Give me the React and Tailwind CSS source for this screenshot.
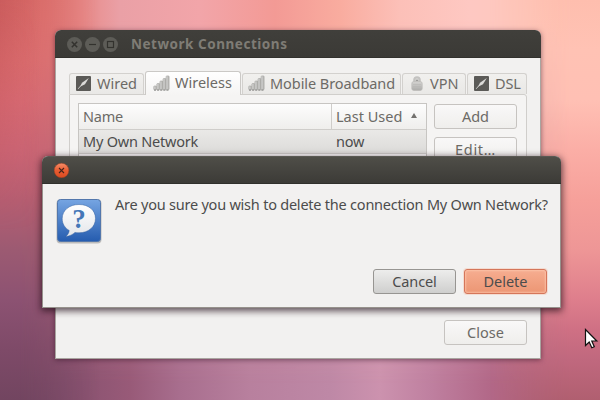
import React from "react";

function WiredIcon() {
  return (
    <svg width="15" height="15" viewBox="0 0 15 15" className="-mt-px shrink-0">
      <rect x="0" y="0" width="15" height="15" rx="1" fill="#5b5a57" />
      <path d="M2.200 12.800L5 9.500" stroke="#c9c8c5" strokeWidth="1" />
      <path d="M4 10.800L6 6.800L12.800 2L9 8.300Z" fill="#dcdbd9" />
    </svg>
  );
}

function SignalIcon({ className }) {
  return (
    <svg width="17" height="16" viewBox="0 0 17 16" className={"shrink-0 " + className}>
      <defs>
        <linearGradient id="bar" x1="0" x2="1">
          <stop offset="0" stopColor="#d9d9d8" />
          <stop offset="1" stopColor="#b0afad" />
        </linearGradient>
      </defs>
      <g fill="url(#bar)" stroke="#a3a2a0" strokeWidth=".6">
        <rect x=".7" y="11" width="3" height="3.800" rx=".8" />
        <rect x="3.800" y="8.500" width="3" height="6.300" rx=".8" />
        <rect x="6.900" y="6" width="3" height="8.800" rx=".8" />
        <rect x="10" y="3.500" width="3" height="11.300" rx=".8" />
        <rect x="13.100" y=".9" width="3" height="13.900" rx=".8" />
      </g>
      <path d="M1 15.100H16" stroke="#7d7c7a" strokeWidth=".9" strokeDasharray="2 1.100" />
    </svg>
  );
}

function LockIcon() {
  return (
    <svg width="12" height="15" viewBox="0 0 12 15" className="-mt-px shrink-0">
      <defs>
        <linearGradient id="lock" x1="0" y1="0" x2="0" y2="1">
          <stop offset="0" stopColor="#d4d3d1" />
          <stop offset="1" stopColor="#adacaa" />
        </linearGradient>
      </defs>
      <path d="M3.200 7V4a2.800 2.800 0 0 1 5.600 0V7" fill="#d8d7d5" stroke="#c3c2c0" strokeWidth="2" />
      <rect x=".8" y="5.500" width="10.400" height="9" rx="2" fill="url(#lock)" stroke="#bbbab8" strokeWidth=".7" />
      <path d="M4.800 4.300h2.400" stroke="#8e8d8b" />
      <path d="M2 8.500h8M2 10.500h8M2 12.500h8" stroke="#b5b4b2" strokeWidth=".5" />
    </svg>
  );
}

function Tab({ className, children }) {
  return (
    <div className={"flex h-[21px] items-center rounded-t-[3px] border border-b-0 border-[#d3d1ce] bg-gradient-to-b from-[#f1f0ee] to-[#e9e8e6] whitespace-nowrap " + className}>
      {children}
    </div>
  );
}

function Button({ className, children }) {
  return (
    <div className={"flex h-[25px] w-[83px] shrink-0 items-center justify-center rounded-[3px] border pb-px text-[14.5px] leading-none " + className}>
      {children}
    </div>
  );
}

const pale = "border-[#c6c3c0] bg-gradient-to-b from-[#f9f8f8] to-[#efeeec] text-[#6c6a66]";

function NetworkWindow() {
  return (
    <section className="absolute left-[55px] top-[30px] flex h-[329px] w-[486px] flex-col rounded-t-[6px] bg-[#f2f1f0] shadow-[0_1px_5px_rgba(40,10,30,0.5)]">
      <header className="flex h-[28px] shrink-0 items-center rounded-t-[6px] border-b border-[#32312d] bg-gradient-to-b from-[#403f3b] to-[#3b3a36] pl-[12px]">
        <svg width="52" height="16" viewBox="0 0 52 16">
          <g fill="#5d5c57">
            <circle cx="7.500" cy="8.500" r="7.500" />
            <circle cx="25.500" cy="8.500" r="7.500" />
            <circle cx="43.500" cy="8.500" r="7.500" />
          </g>
          <g fill="none" stroke="#33322e" strokeWidth="1.200">
            <path d="M4.800 5.800l5.400 5.400M10.200 5.800l-5.400 5.400" strokeWidth="1.500" />
            <path d="M22 8.500h7" />
            <rect x="40.500" y="5.500" width="6" height="6" />
          </g>
        </svg>
        <h1 className="ml-[12px] mt-[2px] text-[13.5px] font-bold leading-none tracking-[0.53px] text-[#7f7c75]">Network Connections</h1>
      </header>
      <div className="flex flex-1 flex-col border border-t-0 border-[#a9a5a0] px-[13px] pt-[13px]">
        <nav className="relative z-10 flex h-[24px] items-end gap-px text-[14.5px] leading-none text-[#6c6a66]">
          <Tab className="mb-px w-[75px] gap-[6px] pl-[6px]"><WiredIcon /><span className="-mt-px">Wired</span></Tab>
          <div className="flex h-[24px] w-[96px] items-center gap-[5px] rounded-t-[3px] border border-b-0 border-[#cbc9c6] bg-gradient-to-b from-white to-[#f5f4f3] pl-[7px] whitespace-nowrap">
            <SignalIcon className="-mt-[2px]" /><span className="-mt-[3px]">Wireless</span>
          </div>
          <Tab className="mb-px w-[159px] gap-[5px] pl-[5px]"><SignalIcon className="-mt-[3px]" /><span className="-mt-px tracking-[-0.07px]">Mobile Broadband</span></Tab>
          <Tab className="mb-px w-[64px] gap-[7px] pl-[8px]"><LockIcon /><span className="-mt-px">VPN</span></Tab>
          <Tab className="mb-px w-[60px] gap-[6px] pl-[6px]"><WiredIcon /><span className="-mt-px tracking-[-0.1px]">DSL</span></Tab>
        </nav>
        <div className="-mt-px flex h-[210px] w-[458px] gap-[7px] rounded-tr-[3px] border border-[#d0cecb] bg-[#f5f4f3] pl-[8px] pt-[8px]">
          <div className="h-[195px] w-[349px] border border-[#c7c5c2] bg-white text-[14.5px] leading-none">
            <div className="flex h-[26px] border-b border-[#cfcdca] bg-gradient-to-b from-[#fdfdfd] to-[#efeeec] text-[#6c6a66]">
              <div className="flex w-[252px] items-center pl-[4px] tracking-[-0.2px]">Name</div>
              <div className="flex flex-1 items-center border-l border-[#cfcdca] pl-[4px]">
                <span className="w-[75px] whitespace-nowrap">Last Used</span>
                <svg width="6" height="5" viewBox="0 0 6 5" className="-mt-[3px]"><path d="M3 0L6 5H0Z" fill="#73716e" /></svg>
              </div>
            </div>
            <div className="flex h-[24px] border-b border-[#cfcdca] bg-gradient-to-b from-[#eae9e7] to-[#dcdbd9] text-[#4c4c4c]">
              <div className="flex w-[253px] items-center pl-[4px] tracking-[-0.22px]">My Own Network</div>
              <div className="flex items-center pl-[4px] tracking-[-0.2px]">now</div>
            </div>
          </div>
          <div className="flex flex-col gap-[8px] pt-px">
            <Button className={pale}>Add</Button>
            <Button className={"tracking-[0.7px] " + pale}>Edit…</Button>
          </div>
        </div>
        <footer className="mt-[16px] flex justify-end">
          <Button className={pale}>Close</Button>
        </footer>
      </div>
    </section>
  );
}

function QuestionIcon() {
  return (
    <svg width="46" height="46" viewBox="0 0 46 46" className="shrink-0">
      <defs>
        <linearGradient id="tile" x1="0" y1="0" x2="0" y2="1">
          <stop offset="0" stopColor="#76a5e2" />
          <stop offset="1" stopColor="#255caf" />
        </linearGradient>
        <linearGradient id="bubble" x1="0" y1="0" x2="0" y2="1">
          <stop offset="0" stopColor="#ffffff" />
          <stop offset="1" stopColor="#e4e6ea" />
        </linearGradient>
      </defs>
      <rect x="0.500" y="1.500" width="45" height="44" rx="4" fill="#000" opacity=".22" />
      <rect x="1.500" y="1.500" width="43" height="42" rx="3" fill="url(#tile)" stroke="#5377ac" />
      <path d="M23 6.500c9.300 0 16.500 5.500 16.500 13.900S32.500 34.800 23 34.800c-1.500 0-2.800-.1-4-.4-2.300 2.200-5.300 3.800-9.300 4 2.200-1.500 3.200-3.700 3.500-5.900C9 30 6.200 25.900 6.200 20.700 6.200 12 13.700 6.500 23 6.500Z" fill="url(#bubble)" stroke="#315f9f" strokeOpacity=".5" />
      <text x="23" y="29.500" textAnchor="middle" fontFamily="'Liberation Serif', serif" fontWeight="bold" fontSize="27" fill="#4577b8">?</text>
    </svg>
  );
}

function ConfirmDialog() {
  return (
    <section className="absolute left-[42px] top-[156px] flex h-[152px] w-[519px] flex-col rounded-t-[6px] bg-[#f2f1f0] text-[#4c4c4c] shadow-[0_2px_7px_1px_rgba(30,10,20,0.7)]">
      <header className="flex h-[28px] shrink-0 items-center rounded-t-[6px] border-b border-t border-b-[#30302c] border-t-[#5a5953] bg-gradient-to-b from-[#4f4e48] to-[#3c3b37] pl-[12px]">
        <svg width="16" height="16" viewBox="0 0 16 16">
          <defs>
            <linearGradient id="close" x1="0" y1="0" x2="0" y2="1">
              <stop offset="0" stopColor="#f58d68" />
              <stop offset=".5" stopColor="#e75c32" />
              <stop offset="1" stopColor="#dc4b20" />
            </linearGradient>
          </defs>
          <circle cx="7.500" cy="8.500" r="7.300" fill="url(#close)" stroke="#9b4024" strokeWidth=".5" />
          <path d="M5 6l5 5M10 6l-5 5" stroke="#45241b" strokeWidth="1.100" />
        </svg>
      </header>
      <div className="flex flex-1 flex-col border border-t-0 border-[#96928c] pb-[13px] pl-[13px] pr-[13px] pt-[14px]">
        <div className="flex gap-[13px]">
          <QuestionIcon />
          <p className="mt-[-2px] whitespace-nowrap text-[14.5px] leading-[17px] tracking-[-0.225px]">Are you sure you wish to delete the connection My Own Network?</p>
        </div>
        <div className="mt-auto flex justify-end gap-[8px]">
          <Button className="border-[#979592] bg-gradient-to-b from-[#ededec] to-[#cfcfce] tracking-[-0.1px]">Cancel</Button>
          <Button className="border-[#d5765a] bg-gradient-to-b from-[#f6ad90] to-[#ec9674] shadow-[inset_0_0_2px_1px_rgba(255,205,180,0.65),0_0_0_1px_rgba(245,190,165,0.4)]">Delete</Button>
        </div>
      </div>
    </section>
  );
}

function Wallpaper() {
  return (
    <>
      <div className="absolute inset-0 bg-[linear-gradient(90deg,#744660_0px,#85506e_60px,#985a78_130px,#a86e8e_180px,#b8809e_250px,#be88a6_330px,#cc92ae_380px,#bf80a0_430px,#b26888_490px,#b0606f_600px)]" />
      <div className="absolute inset-0 bg-[linear-gradient(90deg,#c85a58_0px,#dc706c_30px,#e88a88_80px,#eaa0a6_120px,#f2a5a9_200px,#f39a95_275px,#f9ac9f_340px,#fcc0b8_400px,#fec8c2_470px,#fec8bc_530px,#febcac_600px)] [mask-image:linear-gradient(180deg,black_20px,transparent_385px)]" />
      <div className="absolute inset-y-0 left-0 w-[110px] bg-[linear-gradient(180deg,#d86a68_0px,#dc6e70_60px,#d96c75_100px,#cc6676_150px,#b65e72_200px,#9c5a72_250px,#8c5272_300px,#7e4a68_350px,#724560_400px)] [mask-image:linear-gradient(90deg,black_20px,transparent_100px)]" />
      <div className="absolute inset-y-0 left-0 w-[40px] bg-[linear-gradient(90deg,#b8484c66,transparent)] [mask-image:linear-gradient(180deg,black_0px,transparent_230px)]" />
      <div className="absolute inset-y-0 right-0 w-[120px] bg-[linear-gradient(180deg,#febeae_0px,#ffc2b4_50px,#ffc0b4_100px,#fbaea6_150px,#f6a09a_200px,#ee9696_250px,#de7e8c_300px,#cf7084_330px,#c0687e_360px,#b05f70_400px)] [mask-image:linear-gradient(270deg,black_30px,transparent_110px)]" />
    </>
  );
}

export default function App() {
  return (
    <main className="relative h-[400px] w-[600px] overflow-hidden font-['Noto_Sans',sans-serif]">
      <Wallpaper />
      <NetworkWindow />
      <ConfirmDialog />
      <svg width="15" height="22" viewBox="0 0 15 22" className="absolute left-[584px] top-[328px]">
        <path d="M1.500 1.500V17.500L5.200 14L7.800 19.800L10.300 18.700L7.800 13H12.800Z" fill="#fff" stroke="#111" strokeWidth="1.200" />
      </svg>
    </main>
  );
}
